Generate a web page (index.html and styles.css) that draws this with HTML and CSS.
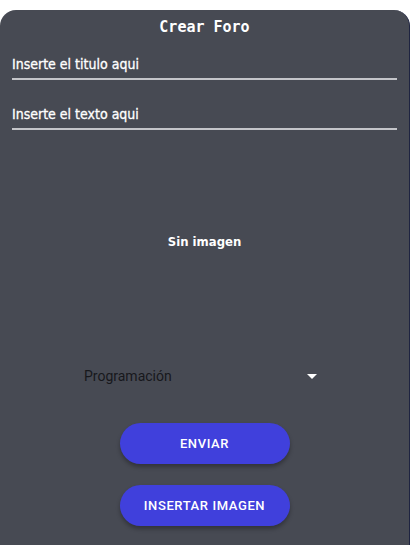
FILE: index.html
```html
<!DOCTYPE html>
<html lang="es">
<head>
<meta charset="utf-8">
<title>Crear Foro</title>
<link rel="stylesheet" href="styles.css">
</head>
<body>
<div class="panel">
  <h1 class="title">Crear Foro</h1>
  <div class="field"><span class="field-label">Inserte el titulo aqui</span></div>
  <div class="field field-second"><span class="field-label">Inserte el texto aqui</span></div>
  <div class="image-box">Sin imagen</div>
  <div class="select-row">
    <span class="select-value">Programación</span>
    <svg class="select-arrow" width="10" height="5" viewBox="0 0 10 5"><path d="M0 0 L10 0 L5 5 Z" fill="#ffffff"/></svg>
  </div>
  <div class="actions">
    <button class="btn">ENVIAR</button>
    <button class="btn">INSERTAR IMAGEN</button>
  </div>
</div>
</body>
</html>
```

FILE: styles.css
```css
html, body {
  margin: 0;
  padding: 0;
  background: #ffffff;
}
body {
  width: 411px;
  height: 545px;
  overflow: hidden;
}
.panel {
  margin-top: 10px;
  width: 410px;
  height: 535px;
  box-sizing: border-box;
  background: #474a53;
  border-radius: 16px 16px 0 0;
  border-right: 1px solid #1e2340;
  display: flex;
  flex-direction: column;
}
.title {
  margin: 8px 0 0;
  font-family: "DejaVu Sans Mono", monospace;
  font-weight: bold;
  font-size: 15px;
  line-height: 18px;
  color: #ffffff;
  text-align: center;
}
.field {
  margin: 19px 12px 0;
  border-bottom: 2px solid #c4c5c9;
  height: 23px;
  display: flex;
  align-items: flex-start;
}
.field-second {
  margin-top: 25px;
}
.field-label {
  font-family: "DejaVu Sans Condensed", "DejaVu Sans", sans-serif;
  font-size: 14px;
  line-height: 18px;
  color: #ffffff;
  -webkit-text-stroke: 0.3px #ffffff;
}
.image-box {
  margin-top: 103px;
  text-align: center;
  font-family: "DejaVu Sans Condensed", "DejaVu Sans", sans-serif;
  font-weight: bold;
  font-size: 13px;
  line-height: 18px;
  color: #ffffff;
}
.select-row {
  margin: 116px 92px 0 84px;
  display: flex;
  align-items: center;
  justify-content: space-between;
  height: 18px;
}
.select-value {
  font-family: Roboto, sans-serif;
  font-size: 14px;
  color: #17181c;
}
.select-arrow {
  display: block;
}
.actions {
  margin-top: 38px;
  display: flex;
  flex-direction: column;
  align-items: center;
  gap: 21px;
}
.btn {
  width: 170px;
  height: 41px;
  border: none;
  border-radius: 21px;
  background: #4040dc;
  color: #ffffff;
  font-family: Roboto, sans-serif;
  font-weight: 500;
  font-size: 13px;
  letter-spacing: 0.6px;
  box-shadow: 0 3px 4px rgba(0,0,0,0.3);
}
```
